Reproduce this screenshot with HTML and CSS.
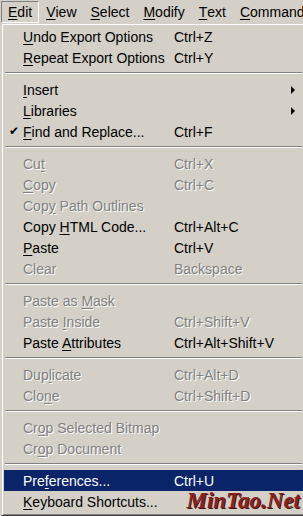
FILE: index.html
```html
<!DOCTYPE html>
<html lang="en">
<head>
    <meta charset="UTF-8">
    <title>Edit Menu</title>
    <link rel="stylesheet" href="styles.css">
</head>
<body>
    <div class="menubar">
        <span class="bar-item open"><u>E</u>dit</span>
        <span class="bar-item"><u>V</u>iew</span>
        <span class="bar-item"><u>S</u>elect</span>
        <span class="bar-item"><u>M</u>odify</span>
        <span class="bar-item"><u>T</u>ext</span>
        <span class="bar-item"><u>C</u>ommands</span>
    </div>

    <div class="dropdown">
        <div class="row"><span class="label"><u>U</u>ndo Export Options</span><span class="key">Ctrl+Z</span></div>
        <div class="row"><span class="label"><u>R</u>epeat Export Options</span><span class="key">Ctrl+Y</span></div>
        <div class="sep"></div>
        <div class="row"><span class="label"><u>I</u>nsert</span><span class="arrow"></span></div>
        <div class="row"><span class="label"><u>L</u>ibraries</span><span class="arrow"></span></div>
        <div class="row"><span class="check">✔</span><span class="label"><u>F</u>ind and Replace...</span><span class="key">Ctrl+F</span></div>
        <div class="sep"></div>
        <div class="row off"><span class="label">Cu<u>t</u></span><span class="key">Ctrl+X</span></div>
        <div class="row off"><span class="label"><u>C</u>opy</span><span class="key">Ctrl+C</span></div>
        <div class="row off"><span class="label">Cop<u>y</u> Path Outlines</span></div>
        <div class="row"><span class="label">Copy <u>H</u>TML Code...</span><span class="key">Ctrl+Alt+C</span></div>
        <div class="row"><span class="label"><u>P</u>aste</span><span class="key">Ctrl+V</span></div>
        <div class="row off"><span class="label">Clear</span><span class="key">Backspace</span></div>
        <div class="sep"></div>
        <div class="row off"><span class="label">Paste as <u>M</u>ask</span></div>
        <div class="row off"><span class="label">Paste <u>I</u>nside</span><span class="key">Ctrl+Shift+V</span></div>
        <div class="row"><span class="label">Paste <u>A</u>ttributes</span><span class="key">Ctrl+Alt+Shift+V</span></div>
        <div class="sep"></div>
        <div class="row off"><span class="label">Dup<u>l</u>icate</span><span class="key">Ctrl+Alt+D</span></div>
        <div class="row off"><span class="label">Clo<u>n</u>e</span><span class="key">Ctrl+Shift+D</span></div>
        <div class="sep"></div>
        <div class="row off"><span class="label">Cr<u>o</u>p Selected Bitmap</span></div>
        <div class="row off"><span class="label">Cr<u>o</u>p Document</span></div>
        <div class="sep"></div>
        <div class="row active"><span class="label">Pre<u>f</u>erences...</span><span class="key">Ctrl+U</span></div>
        <div class="row"><span class="label"><u>K</u>eyboard Shortcuts...</span></div>
        <div class="watermark">MinTao.Net</div>
    </div>
</body>
</html>
```

FILE: styles.css
```css
body {
    margin: 0;
    width: 303px;
    height: 516px;
    overflow: hidden;
    background: #d4d0c8;
    font-family: "Liberation Sans", Arial, sans-serif;
    font-size: 14px;
    color: #000;
}
u {
    text-decoration-thickness: 1px;
    text-underline-offset: 2px;
}

/* top menu bar */
.menubar {
    display: flex;
    height: 22px;
    padding-top: 1px;
    white-space: nowrap;
    overflow: hidden;
}
.bar-item {
    display: flex;
    align-items: center;
    padding: 0 6px;
    border: 1px solid transparent;
    line-height: 20px;
}
.bar-item:first-child {
    margin-left: 1px;
    padding: 0 6px 0 6px;
}
.bar-item.open {
    border-color: #808080 #fff #fff #808080;
}

/* dropdown */
.dropdown {
    position: relative;
    margin-left: 1px;
    width: 299px;
    height: 489px;
    border: 1px solid;
    border-color: #d4d0c8 #404040 #404040 #d4d0c8;
    box-shadow: inset 1px 1px 0 #fff, inset -1px -1px 0 #808080;
    padding: 2px 2px 0 2px;
}
.row {
    position: relative;
    display: flex;
    align-items: center;
    height: 21px;
    padding-left: 19px;
    white-space: nowrap;
}
.label {
    width: 151px;
}
.key {
    flex: 1;
}
.off {
    color: #808080;
    text-shadow: 1px 1px 0 #fff;
}
.active {
    background: #0a246a;
    color: #fff;
}
.check {
    position: absolute;
    left: 5px;
    top: 3px;
    font-size: 12px;
    font-family: "DejaVu Sans", sans-serif;
}
.arrow {
    margin-left: auto;
    margin-right: 8px;
    width: 0;
    height: 0;
    border-top: 4px solid transparent;
    border-bottom: 4px solid transparent;
    border-left: 4px solid #000;
}
.sep {
    height: 11px;
    margin: 0 1px;
    box-sizing: border-box;
    padding-top: 4px;
}
.sep::before {
    content: "";
    display: block;
    height: 1px;
    background: #808080;
    border-bottom: 1px solid #fff;
}

.watermark {
    position: absolute;
    right: 5px;
    bottom: 1px;
    font-family: "Liberation Serif", "Times New Roman", serif;
    font-weight: bold;
    font-style: italic;
    font-size: 23px;
    color: #8e1f1a;
    text-shadow: 1px 1px 0 #3a1410;
}
```
